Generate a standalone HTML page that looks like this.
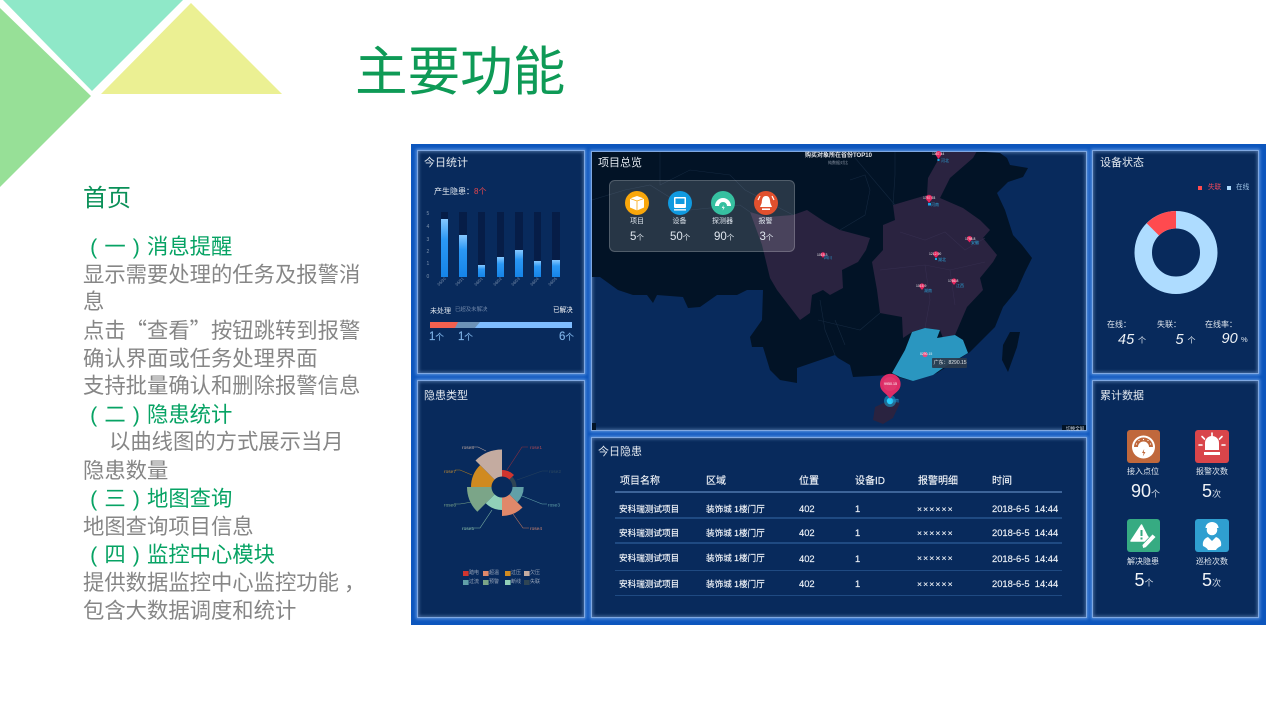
<!DOCTYPE html>
<html lang="zh-CN">
<head>
<meta charset="utf-8">
<title>主要功能</title>
<style>
html,body{margin:0;padding:0;width:1280px;height:720px;overflow:hidden;background:#fff}
body{position:relative;font-family:"Noto Sans CJK SC","WenQuanYi Zen Hei",sans-serif}
svg{position:absolute;left:0;top:0}
.l{position:absolute;left:83px;font-size:21.33px;line-height:28px;height:28px;white-space:nowrap;color:#868686}
.g{color:#07a364}
.pc{display:inline-block;width:21.33px;text-align:center;font-family:"Liberation Sans",sans-serif}
.t{position:absolute;white-space:nowrap;line-height:1;color:#dfe6ee;font-family:"Liberation Sans","Noto Sans CJK SC",sans-serif}
.p{position:absolute;box-sizing:border-box;background:#082a5c;border:1px solid #7fa8e2;box-shadow:0 0 3px 1px #5f94dc,inset 0 0 3px 1px rgba(140,180,235,.5)}
.h{font-size:11px;color:#e2e8ef}
.row{position:absolute;left:615px;width:447px;height:1.4px;background:#1f4a82}
.r{font-size:9.4px;color:#eef2f7;-webkit-text-stroke:.15px #eef2f7}
.rc{font-size:8.6px;color:#eef2f7;-webkit-text-stroke:.15px #eef2f7}
.th{font-size:10px;color:#eef2f7;-webkit-text-stroke:.15px #eef2f7}
.b{position:absolute;width:7.3px;background:linear-gradient(#86c8ff,#2b98f5 35%,#1584e8)}
.bk{position:absolute;width:7.3px;top:212px;height:64.7px;background:#061d47}
.v{font-size:3.4px;color:#f2f2f2}
.c{font-size:4px;color:#2aa4d8}
.lg{font-size:5px;color:#98a5b8}
.n{font-size:11.5px;color:#7db2e6;-webkit-text-stroke:.15px #7db2e6}
.n span{font-size:8.5px}
#dash{position:absolute;left:0;top:0;width:1280px;height:720px;filter:blur(.35px)}
</style>
</head>
<body>
<svg width="1280" height="720">
<polygon points="3,0 183,0 92,91" fill="#8fe8c8"/>
<polygon points="191,3 282,94 101,94" fill="#ebf093"/>
<polygon points="0,8 91,96 0,187" fill="#97e097"/>
</svg>

<div class="t" style="left:355px;top:42px;font-size:52.6px;color:#0e9a56;font-family:'Noto Sans CJK SC',sans-serif">主要功能</div>
<div class="l" style="top:182px;font-size:24px;color:#0a9058">首页</div>
<div class="l g" style="top:232px"><span class="pc">(</span>一<span class="pc">)</span>消息提醒</div>
<div class="l" style="top:260px">显示需要处理的任务及报警消</div>
<div class="l" style="top:287px">息</div>
<div class="l" style="top:316px">点击“查看”按钮跳转到报警</div>
<div class="l" style="top:344px">确认界面或任务处理界面</div>
<div class="l" style="top:371px">支持批量确认和删除报警信息</div>
<div class="l g" style="top:400px"><span class="pc">(</span>二<span class="pc">)</span>隐患统计</div>
<div class="l" style="top:427px;left:109px">以曲线图的方式展示当月</div>
<div class="l" style="top:456px">隐患数量</div>
<div class="l g" style="top:484px"><span class="pc">(</span>三<span class="pc">)</span>地图查询</div>
<div class="l" style="top:512px">地图查询项目信息</div>
<div class="l g" style="top:540px"><span class="pc">(</span>四<span class="pc">)</span>监控中心模块</div>
<div class="l" style="top:568px">提供数据监控中心监控功能<span style="position:relative;left:5px">，</span></div>
<div class="l" style="top:596px">包含大数据调度和统计</div>

<div id="dash">
<div style="position:absolute;left:411px;top:144px;width:855px;height:481px;background:#0d56bd"></div>
<div class="p" style="left:417px;top:150px;width:168px;height:224px"></div>
<div class="p" style="left:417px;top:380px;width:168px;height:238px"></div>
<div class="p" style="left:591px;top:151px;width:496px;height:280px"></div>
<div class="p" style="left:591px;top:437px;width:496px;height:181px"></div>
<div class="p" style="left:1092px;top:150px;width:167px;height:224px"></div>
<div class="p" style="left:1092px;top:380px;width:167px;height:238px"></div>

<svg width="1280" height="720">
<defs><clipPath id="mc"><rect x="592" y="152" width="494" height="278"/></clipPath></defs>
<g clip-path="url(#mc)">
<polygon fill="#021326" points="591,151 976,151 985,152 1000,153 1007,158 1010,165 1028,168 1023,177 1008,182 997,193 1005,210 1013,235 1022,245 1032,258 1025,272 1017,290 1003,307 995,327 970,352 937,373 913,381 890,375 853,377 850,365 838,358 835,355 797,368 797,383 780,380 770,370 763,347 752,347 750,337 762,320 763,290 747,290 737,295 717,295 700,307 688,308 683,297 657,295 653,303 647,295 633,295 618,290 600,277 591,277"/>
<polygon fill="#2a2340" points="750,212 767,217 793,215 807,210 825,222 840,230 870,238 866,250 858,262 842,270 843,288 830,295 823,290 812,295 810,313 800,320 790,307 777,290 770,278 762,245"/>
<polygon fill="#2a2340" points="937,151 977,151 973,158 950,178 945,188 940,198 963,208 980,220 990,230 983,238 997,255 993,262 980,278 983,290 967,307 955,335 943,338 940,330 925,328 912,332 903,338 902,317 880,313 877,290 872,262 883,250 883,225 895,220 893,205 927,195 928,178 937,162"/>
<polygon fill="#2a96c0" points="912,332 925,328 940,330 937,338 955,335 963,340 968,353 943,368 933,375 913,381 900,377 892,373 905,350"/>
<polygon fill="#2a2340" points="875,407 890,400 900,403 893,418 883,424 873,420"/>
<polygon fill="#021326" points="1010,332 1020,332 1017,347 1008,372 1002,360 1003,345"/>
<g fill="none" stroke="#14283f" stroke-width=".6">
<path d="M592,200 L625,190 L650,185 L690,210 L740,205 L750,212"/>
<path d="M660,152 L660,185 L690,170 L730,175 L745,190 L793,215"/>
<path d="M895,152 L895,175 L893,205"/>
<path d="M850,152 L895,205"/>
<path d="M850,180 L865,175 L870,190 L865,215 L840,230"/>
<path d="M820,300 L825,330 L835,355 M818,320 L860,330 L880,313 M835,320 L845,345"/>
</g>
<g fill="none" stroke="#352e4e" stroke-width=".6">
<path d="M900,232 L925,240 L945,232 L965,250 L985,238 M880,270 L925,265 L950,270 L985,262 M925,265 L930,300 L925,328 M950,270 L955,305"/>
</g>
<rect x="1062" y="425" width="25" height="7" fill="#021326"/>
<rect x="591" y="423" width="5" height="8" fill="#021326"/>
</g>

<!-- pins -->
<g fill="#e8265f">
<circle cx="938.5" cy="154" r="3"/><path d="M936.2,155.5 L938.5,159 L940.8,155.5Z"/>
<circle cx="929" cy="198" r="3.2"/><path d="M926.5,199.5 L929,203 L931.5,199.5Z"/>
<circle cx="969.5" cy="238.5" r="2.6"/><path d="M967.5,240 L969.5,242.5 L971.5,240Z"/>
<circle cx="936" cy="254" r="2.8"/><path d="M934,255.5 L936,258 L938,255.5Z"/>
<circle cx="954" cy="281" r="2.6"/><path d="M952,282.5 L954,285 L956,282.5Z"/>
<circle cx="922" cy="286" r="2.6"/><path d="M920,287.5 L922,290 L924,287.5Z"/>
<circle cx="823" cy="254.5" r="2.3"/><path d="M821.3,255.5 L823,258 L824.7,255.5Z"/>
<circle cx="925" cy="354.5" r="2.6" fill="#e84a80"/>
</g>
<g fill="#17a8e8">
<rect x="937.5" y="159" width="2" height="2"/><rect x="928" y="203" width="3" height="2.5"/><rect x="935" y="258" width="2" height="2"/>
</g>
<circle cx="890" cy="401" r="6" fill="#1fc6f5" opacity=".45"/>
<circle cx="890" cy="401" r="3.2" fill="#25d0ff"/>
<path d="M890,399 C887,393 880,392 880,384 A10.3,10.3 0 0 1 900.6,384 C900.6,392 893,393 890,399Z" fill="#dc2c66"/>
<circle cx="890" cy="384" r="7" fill="#e64a7c" opacity=".35"/>
<rect x="932" y="358" width="35" height="10" rx="1" fill="#2b3a4c" opacity=".92"/>

<!-- bars -->
<g font-family="Liberation Sans" font-size="5" fill="#7e93ae">
<text x="426.5" y="215">5</text><text x="426.5" y="228">4</text><text x="426.5" y="241">3</text><text x="426.5" y="253">2</text><text x="426.5" y="265">1</text><text x="426.5" y="278">0</text>
<text transform="translate(439,286) rotate(-45)" font-size="4">05/30</text><text transform="translate(457,286) rotate(-45)" font-size="4">05/31</text><text transform="translate(476,286) rotate(-45)" font-size="4">06/01</text><text transform="translate(495,286) rotate(-45)" font-size="4">06/02</text><text transform="translate(513,286) rotate(-45)" font-size="4">06/03</text><text transform="translate(532,286) rotate(-45)" font-size="4">06/04</text><text transform="translate(550,286) rotate(-45)" font-size="4">06/05</text>
</g>
<!-- progress -->
<polygon points="430,322 572,322 572,328 430,328" fill="#7ebcff"/>
<polygon points="430,322 480,322 475,328 430,328" fill="#6d93b8"/>
<polygon points="430,322 458,322 455,328 430,328" fill="#f2604f"/>

<!-- rose -->
<g transform="translate(502,487)">
<path d="M0,0 L0,-17 A17,17 0 0 1 12,-12Z" fill="#d0352f"/>
<path d="M0,0 L10.25,-10.25 A14.5,14.5 0 0 1 14.5,0Z" fill="#2f4554"/>
<path d="M0,0 L21.7,0 A21.7,21.7 0 0 1 15.3,15.3Z" fill="#61a0a8"/>
<path d="M0,0 L20.5,20.5 A29,29 0 0 1 0,29Z" fill="#e0886a"/>
<path d="M0,0 L0,23 A23,23 0 0 1 -16.3,16.3Z" fill="#91d0b8"/>
<path d="M0,0 L-24.7,24.7 A35,35 0 0 1 -35,0Z" fill="#7ba588"/>
<path d="M0,0 L-31,0 A31,31 0 0 1 -21.9,-21.9Z" fill="#d08a20"/>
<path d="M0,0 L-26.5,-26.5 A37.5,37.5 0 0 1 0,-37.5Z" fill="#c4aba0"/>
<circle r="10.5" fill="#082a5c"/>
</g>
<g fill="none" stroke-width=".6">
<polyline points="507,470 522,447 528,447" stroke="#8a2f3f"/>
<polyline points="517,480 542,471 548,471" stroke="#25405c"/>
<polyline points="522,496 542,504 547,504" stroke="#61a0a8"/>
<polyline points="513,514 523,528 529,528" stroke="#c0775f"/>
<polyline points="492,510 480,528 474,528" stroke="#80b5a5"/>
<polyline points="472,502 460,504 455,504" stroke="#7ba588"/>
<polyline points="472,475 460,470 455,470" stroke="#a8781f"/>
<polyline points="486,451 478,447 474,447" stroke="#b0a0a0"/>
</g>
<g font-family="Liberation Sans" font-size="4.8">
<text x="530" y="449" fill="#b04a55">rose1</text><text x="549" y="473" fill="#2f4a60">rose2</text><text x="548" y="506.5" fill="#61a0a8">rose3</text><text x="530" y="530" fill="#d08570">rose4</text>
<text x="462" y="530" fill="#91c7ae">rose5</text><text x="444" y="506.5" fill="#7ba588">rose6</text><text x="444" y="473" fill="#c08a30">rose7</text><text x="462" y="449" fill="#c4aba0">rose8</text>
</g>
<g>
<rect x="463" y="571" width="5.6" height="5" fill="#d0352f"/><rect x="483" y="571" width="5.6" height="5" fill="#e0886a"/><rect x="505" y="571" width="5.6" height="5" fill="#d08a20"/><rect x="524" y="571" width="5.6" height="5" fill="#c4aba0"/>
<rect x="463" y="580" width="5.6" height="5" fill="#61a0a8"/><rect x="483" y="580" width="5.6" height="5" fill="#7ba588"/><rect x="505" y="580" width="5.6" height="5" fill="#91d0b8"/><rect x="524" y="580" width="5.6" height="5" fill="#2f4554"/>
</g>

<!-- donut -->
<circle cx="1176" cy="252.5" r="32.75" fill="none" stroke="#aedcff" stroke-width="17.5"/>
<path d="M1176,211 A41.5,41.5 0 0 0 1146.7,223.2 L1159,235.5 A24,24 0 0 1 1176,228.5Z" fill="#ff4a4f"/>
<rect x="1198" y="186" width="4" height="4" fill="#ff4a4f"/>
<rect x="1227" y="186" width="4" height="4" fill="#aedcff"/>

<!-- overview card -->
<rect x="609.5" y="180.5" width="185" height="71" rx="5" fill="#fff" fill-opacity=".15" stroke="#fff" stroke-opacity=".26"/>
<circle cx="637" cy="203" r="12" fill="#f9a70b"/>
<circle cx="680" cy="203" r="12" fill="#109ae0"/>
<circle cx="723" cy="203" r="12" fill="#36c0a0"/>
<circle cx="766" cy="203" r="12" fill="#e1502e"/>
<path d="M637,196 L644,198.5 V207.5 L637,210.5 L630,207.5 V198.5Z" fill="#fff"/>
<path d="M630,198.5 L637,201 L644,198.5 M637,201 V210.5" fill="none" stroke="#f9a70b" stroke-width=".8"/>
<rect x="674" y="197" width="12" height="11" rx="1" fill="#fff"/>
<rect x="675.5" y="198.5" width="9" height="5.5" fill="#109ae0"/>
<rect x="674" y="209.2" width="12" height="1.3" fill="#fff"/>
<path d="M715,206 A8,8 0 0 1 731,206 L727,206 A4,4 0 0 0 719,206Z" fill="#fff"/>
<path d="M723.6,205 L721.8,208 H723.3 L722.6,210.5 L724.8,207.2 H723.3Z" fill="#fff"/>
<path d="M766,196 C762.5,196 762,199 761.7,203 L760,207 H772 L770.3,203 C770,199 769.5,196 766,196Z" fill="#fff"/>
<rect x="762" y="208.4" width="8" height="1.6" fill="#fff"/>
<path d="M760,196 L758,200 M772,196 L774,200" stroke="#fff" stroke-width="1.2"/>

<!-- stat icons -->
<rect x="1127" y="430" width="33" height="33" rx="3" fill="#c0683c"/>
<rect x="1195" y="430" width="34" height="33" rx="3" fill="#d9454a"/>
<rect x="1127" y="519" width="33" height="33" rx="3" fill="#36ab82"/>
<rect x="1195" y="519" width="34" height="33" rx="3" fill="#2f9fd0"/>
<circle cx="1143.5" cy="447" r="11.5" fill="#fff"/>
<path d="M1134,447 A9.5,9.5 0 0 1 1153,447 H1149 A5.5,5.5 0 0 0 1138,447Z" fill="#c0683c"/>
<g fill="#fff"><circle cx="1136.5" cy="444" r=".6"/><circle cx="1139" cy="440.5" r=".6"/><circle cx="1143.5" cy="439.5" r=".6"/><circle cx="1148" cy="440.5" r=".6"/><circle cx="1150.5" cy="444" r=".6"/></g>
<path d="M1144.2,449 L1142,453 H1143.6 L1142.8,456.5 L1145.5,452 H1143.8Z" fill="#c0683c"/>
<path d="M1205,450 V443 A7,7 0 0 1 1219,443 V450Z" fill="#fff"/>
<rect x="1204" y="452" width="16" height="3" fill="#fff"/>
<path d="M1212,436 V433 M1204.5,439 L1202,436.5 M1219.5,439 L1222,436.5 M1202,445 H1199 M1222,445 H1225" stroke="#fff" stroke-width="1.6" stroke-linecap="round"/>
<path d="M1141.5,525 L1131,541 H1151 L1147,536 L1141.5,525Z" fill="#fff" stroke="#fff" stroke-linejoin="round" stroke-width="1.5"/>
<rect x="1140.5" y="530" width="2" height="6" fill="#36ab82"/>
<rect x="1140.5" y="537.5" width="2" height="2" fill="#36ab82"/>
<path d="M1142,545 L1143,548.5 L1146,547.5 L1156,537 L1152.5,534Z" fill="#fff" stroke="#36ab82" stroke-width=".7"/>
<circle cx="1212" cy="530" r="5.3" fill="#fff"/>
<path d="M1205.5,528 A6.5,6 0 0 1 1218.5,528Z" fill="#fff"/>
<path d="M1203,546 C1202,541 1205,538 1208,537 L1212,541 L1216,537 C1219,538 1222,541 1221,546 C1219,547 1217,548 1216,550 H1208 C1207,548 1205,547 1203,546Z" fill="#fff"/>
</svg>

<div class="bk" style="left:441px"></div><div class="bk" style="left:459.3px"></div><div class="bk" style="left:478px"></div><div class="bk" style="left:496.7px"></div><div class="bk" style="left:515.3px"></div><div class="bk" style="left:533.7px"></div><div class="bk" style="left:552.3px"></div>
<div class="b" style="left:441px;top:219.3px;height:57.4px"></div><div class="b" style="left:459.3px;top:235.3px;height:41.4px"></div><div class="b" style="left:478px;top:265.3px;height:11.4px"></div><div class="b" style="left:496.7px;top:257.3px;height:19.4px"></div><div class="b" style="left:515.3px;top:249.7px;height:27px"></div><div class="b" style="left:533.7px;top:261.3px;height:15.4px"></div><div class="b" style="left:552.3px;top:259.7px;height:17px"></div>

<div class="t h" style="left:424px;top:158px">今日统计</div>
<div class="t h" style="left:424px;top:390.5px">隐患类型</div>
<div class="t h" style="left:598px;top:157.5px">项目总览</div>
<div class="t h" style="left:598px;top:446.5px">今日隐患</div>
<div class="t h" style="left:1100px;top:158px">设备状态</div>
<div class="t h" style="left:1100px;top:390.5px">累计数据</div>

<div class="t" style="left:434px;top:187.5px;font-size:8px">产生隐患：<span style="color:#e8474c">8个</span></div>
<div class="t" style="left:430px;top:307.5px;font-size:7px">未处理</div>
<div class="t" style="left:455px;top:308px;font-size:5.4px;color:#6f86a8">已超及未解决</div>
<div class="t" style="left:553px;top:307.5px;font-size:6.6px;color:#fff">已解决</div>
<div class="t n" style="left:429px;top:332px">1<span>个</span></div>
<div class="t n" style="left:458px;top:332px">1<span>个</span></div>
<div class="t n" style="left:559px;top:332px">6<span>个</span></div>

<div class="t lg" style="left:469px;top:571px">踏电</div><div class="t lg" style="left:489px;top:571px">超温</div><div class="t lg" style="left:511px;top:571px">过压</div><div class="t lg" style="left:530px;top:571px">欠压</div>
<div class="t lg" style="left:469px;top:580px">过流</div><div class="t lg" style="left:489px;top:580px">预警</div><div class="t lg" style="left:511px;top:580px">断线</div><div class="t lg" style="left:530px;top:580px">失联</div>

<!-- map text -->
<div class="t" style="left:805px;top:153px;font-size:6px;font-weight:bold;color:#e4e6ea">购买对象所在省份TOP10</div>
<div class="t" style="left:828px;top:161px;font-size:4px;color:#8a94a4">纯数据对比</div>
<div class="t" style="left:933.5px;top:361px;font-size:5px;color:#e2e6ea">广东：8290.15</div>
<div class="t" style="left:884px;top:382.5px;font-size:3.6px;color:#fff">9950.15</div>
<div class="t v" style="left:932px;top:152.5px">1357.44</div>
<div class="t v" style="left:923px;top:196.5px">1757.93</div>
<div class="t v" style="left:965px;top:237.5px">1798.8</div>
<div class="t v" style="left:929px;top:253px">1212.90</div>
<div class="t v" style="left:948px;top:280px">1766.8</div>
<div class="t v" style="left:916px;top:285px">1015.9</div>
<div class="t v" style="left:817px;top:253.5px">1015.3</div>
<div class="t v" style="left:920px;top:353px">8290.15</div>
<div class="t c" style="left:891px;top:398.5px">海南</div>
<div class="t c" style="left:824px;top:256px">四川</div>
<div class="t c" style="left:941px;top:158.5px">河北</div>
<div class="t c" style="left:931px;top:202.5px">河南</div>
<div class="t c" style="left:971px;top:241px">安徽</div>
<div class="t c" style="left:938px;top:257.5px">湖北</div>
<div class="t c" style="left:956px;top:284px">江西</div>
<div class="t c" style="left:924px;top:289px">湖南</div>
<div class="t" style="left:1066px;top:427px;font-size:4.6px;color:#cfd6e0">切换全屏</div>

<!-- overview -->
<div class="t" style="left:630px;top:218px;font-size:7px">项目</div>
<div class="t" style="left:672.5px;top:218px;font-size:7px">设备</div>
<div class="t" style="left:712px;top:218px;font-size:7px">探测器</div>
<div class="t" style="left:758.5px;top:218px;font-size:7px">报警</div>
<div class="t" style="left:630px;top:232px;font-size:11.5px">5<span style="font-size:7.5px">个</span></div>
<div class="t" style="left:670px;top:232px;font-size:11.5px">50<span style="font-size:7.5px">个</span></div>
<div class="t" style="left:714px;top:232px;font-size:11.5px">90<span style="font-size:7.5px">个</span></div>
<div class="t" style="left:759.5px;top:232px;font-size:11.5px">3<span style="font-size:7.5px">个</span></div>

<!-- table -->
<div class="row" style="top:491.3px;background:#3d6499"></div>
<div class="row" style="top:517.2px"></div><div class="row" style="top:542.2px"></div><div class="row" style="top:569.6px"></div><div class="row" style="top:595px"></div>
<div class="t th" style="left:620px;top:476.5px">项目名称</div>
<div class="t th" style="left:706px;top:476.5px">区域</div>
<div class="t th" style="left:799px;top:476.5px">位置</div>
<div class="t th" style="left:855px;top:476.5px">设备ID</div>
<div class="t th" style="left:918px;top:476.5px">报警明细</div>
<div class="t th" style="left:992px;top:476.5px">时间</div>

<div class="t rc" style="left:619px;top:504.5px">安科瑞测试项目</div><div class="t rc" style="left:706px;top:504.5px">装饰城 1楼门厅</div><div class="t r" style="left:799px;top:504px">402</div><div class="t r" style="left:855px;top:504px">1</div><div class="t rc" style="left:917px;top:504.5px;letter-spacing:1.1px">××××××</div><div class="t r" style="left:992px;top:504px;white-space:pre">2018-6-5  14:44</div>
<div class="t rc" style="left:619px;top:528.5px">安科瑞测试项目</div><div class="t rc" style="left:706px;top:528.5px">装饰城 1楼门厅</div><div class="t r" style="left:799px;top:528px">402</div><div class="t r" style="left:855px;top:528px">1</div><div class="t rc" style="left:917px;top:528.5px;letter-spacing:1.1px">××××××</div><div class="t r" style="left:992px;top:528px;white-space:pre">2018-6-5  14:44</div>
<div class="t rc" style="left:619px;top:554px">安科瑞测试项目</div><div class="t rc" style="left:706px;top:554px">装饰城 1楼门厅</div><div class="t r" style="left:799px;top:553.5px">402</div><div class="t r" style="left:855px;top:553.5px">1</div><div class="t rc" style="left:917px;top:554px;letter-spacing:1.1px">××××××</div><div class="t r" style="left:992px;top:553.5px;white-space:pre">2018-6-5  14:44</div>
<div class="t rc" style="left:619px;top:579.5px">安科瑞测试项目</div><div class="t rc" style="left:706px;top:579.5px">装饰城 1楼门厅</div><div class="t r" style="left:799px;top:579px">402</div><div class="t r" style="left:855px;top:579px">1</div><div class="t rc" style="left:917px;top:579.5px;letter-spacing:1.1px">××××××</div><div class="t r" style="left:992px;top:579px;white-space:pre">2018-6-5  14:44</div>

<!-- device status -->
<div class="t" style="left:1208px;top:185px;font-size:6.6px;color:#f0485a">失联</div>
<div class="t" style="left:1236px;top:185px;font-size:6.6px;color:#9fc4e6">在线</div>
<div class="t" style="left:1107px;top:320.5px;font-size:8px">在线：</div>
<div class="t" style="left:1157px;top:320.5px;font-size:8px">失联：</div>
<div class="t" style="left:1205px;top:320.5px;font-size:8px">在线率：</div>
<div class="t" style="left:1118px;top:332.5px;font-size:14.5px;font-style:italic;color:#eef2f6">45</div><div class="t" style="left:1138px;top:337px;font-size:8px">个</div>
<div class="t" style="left:1175.5px;top:332.5px;font-size:14.5px;font-style:italic;color:#eef2f6">5</div><div class="t" style="left:1187.5px;top:337px;font-size:8px">个</div>
<div class="t" style="left:1221.5px;top:331.5px;font-size:14.5px;font-style:italic;color:#eef2f6">90</div><div class="t" style="left:1241px;top:336px;font-size:7.5px">%</div>

<!-- cumulative -->
<div class="t" style="left:1127px;top:468px;font-size:8px">接入点位</div>
<div class="t" style="left:1196px;top:468px;font-size:8px">报警次数</div>
<div class="t" style="left:1127px;top:558px;font-size:8px">解决隐患</div>
<div class="t" style="left:1196px;top:558px;font-size:8px">巡检次数</div>
<div class="t" style="left:1131px;top:481.5px;font-size:18px;color:#f0f3f7">90<span style="font-size:9px;color:#cfd8e4">个</span></div>
<div class="t" style="left:1202px;top:481.5px;font-size:18px;color:#f0f3f7">5<span style="font-size:9px;color:#cfd8e4">次</span></div>
<div class="t" style="left:1134.5px;top:570.5px;font-size:18px;color:#f0f3f7">5<span style="font-size:9px;color:#cfd8e4">个</span></div>
<div class="t" style="left:1202px;top:570.5px;font-size:18px;color:#f0f3f7">5<span style="font-size:9px;color:#cfd8e4">次</span></div>
</div>
</body>
</html>
